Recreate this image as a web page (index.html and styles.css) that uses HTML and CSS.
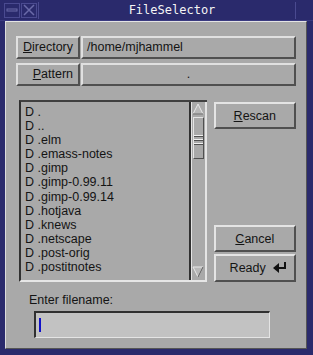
FILE: index.html
```html
<!DOCTYPE html>
<html>
<head>
<meta charset="utf-8">
<link rel="stylesheet" href="styles.css">
</head>
<body>
<div class="window">
  <div class="titlebar">
    <div class="tbtn"><svg width="12" height="12" viewBox="0 0 12 12"><rect x="1" y="5" width="10" height="2" fill="none" stroke="#6a6aa8" stroke-width="1"/></svg></div>
    <div class="tbtn"><svg width="12" height="12" viewBox="0 0 12 12"><path d="M1 1 L11 11 M11 1 L1 11" stroke="#6a6aa8" stroke-width="1.5"/></svg></div>
    <div class="title">FileSelector</div>
  </div>
  <div class="client">
    <div class="fields">
      <div class="frow">
        <div class="flabel left"><u>D</u>irectory</div>
        <div class="fvalue">/home/mjhammel</div>
      </div>
      <div class="frow">
        <div class="flabel right"><u>P</u>attern</div>
        <div class="fvalue center">.</div>
      </div>
    </div>
    <div class="main">
      <div class="listbox">
        <div class="items">
          <div>D .</div>
          <div>D ..</div>
          <div>D .elm</div>
          <div>D .emass-notes</div>
          <div>D .gimp</div>
          <div>D .gimp-0.99.11</div>
          <div>D .gimp-0.99.14</div>
          <div>D .hotjava</div>
          <div>D .knews</div>
          <div>D .netscape</div>
          <div>D .post-orig</div>
          <div>D .postitnotes</div>
        </div>
        <div class="scrollbar">
          <svg class="arrow" width="12" height="12" viewBox="0 0 12 12"><path d="M6 1 L11 11 L1 11 Z" fill="#b8b8b8" stroke="#e8e8e8" stroke-width="1"/><path d="M11 11 L1 11" stroke="#555" stroke-width="1"/></svg>
          <div class="thumb"><span></span><span></span><span></span></div>
          <div class="spacer"></div>
          <svg class="arrow" width="12" height="12" viewBox="0 0 12 12"><path d="M1 1 L11 1 L6 11 Z" fill="#b8b8b8" stroke="#e8e8e8" stroke-width="1"/><path d="M11 1 L6 11" stroke="#555" stroke-width="1"/></svg>
        </div>
      </div>
      <div class="buttons">
        <div class="btn"><u>R</u>escan</div>
        <div class="grow"></div>
        <div class="btn"><u>C</u>ancel</div>
        <div class="btn ready">Ready <svg width="16" height="12" viewBox="0 0 16 12"><path d="M1 8 L7 3 L7 13 Z" fill="#111" transform="translate(0,-2)"/><path d="M7 6 H13 V0" fill="none" stroke="#111" stroke-width="2"/></svg></div>
      </div>
    </div>
    <div class="entry">
      <div class="elabel">Enter filename:</div>
      <div class="einput"><span class="cursor"></span></div>
    </div>
  </div>
</div>
</body>
</html>
```

FILE: styles.css
```css
html, body {
  margin: 0;
  padding: 0;
  background: #2a2a6c;
}
.window {
  width: 313px;
  height: 355px;
  background: #2a2a6c;
  display: flex;
  flex-direction: column;
  font-family: "Liberation Sans", Arial, sans-serif;
  font-size: 12px;
  color: #141414;
}
.titlebar {
  height: 21px;
  display: flex;
  align-items: center;
  padding-left: 4px;
  box-sizing: border-box;
  border-bottom: 1px solid #3a3a80;
}
.tbtn {
  width: 16px;
  height: 15px;
  border: 1px solid #4a4a90;
  box-sizing: border-box;
  display: flex;
  align-items: center;
  justify-content: center;
  margin-right: 1px;
}
.title {
  flex: 1;
  text-align: center;
  color: #f4f4f4;
  font-family: "DejaVu Sans Mono", monospace;
  font-size: 12px;
  padding-left: 10px;
  height: 17px;
  line-height: 16px;
  border-left: 1px solid #4a4a90;
  border-right: 1px solid #4a4a90;
  margin-right: 17px;
}
.client {
  margin: 0 6px 6px 5px;
  flex: 1;
  background: #a9a9a9;
  border-top: 1px solid #e4e4e4;
  border-left: 1px solid #dcdcdc;
  border-right: 1px solid #555;
  border-bottom: 1px solid #555;
  box-sizing: border-box;
  padding: 14px 10px 0 10px;
  display: flex;
  flex-direction: column;
}
.fields {
  display: flex;
  flex-direction: column;
  gap: 4px;
}
.frow {
  display: flex;
  height: 23px;
  gap: 1px;
}
.flabel, .fvalue {
  box-sizing: border-box;
  border-top: 2px solid #e0e0e0;
  border-left: 2px solid #e0e0e0;
  border-bottom: 2px solid #505050;
  border-right: 2px solid #505050;
  line-height: 19px;
  font-size: 12.5px;
}
.flabel {
  width: 64px;
  padding: 0 5px;
}
.flabel.right { text-align: right; }
.fvalue {
  flex: 1;
  padding: 0 4px;
}
.fvalue.center { text-align: center; }
.main {
  display: flex;
  margin-top: 14px;
  height: 182px;
}
.listbox {
  margin-left: 3px;
  width: 189px;
  display: flex;
  box-sizing: border-box;
  border-top: 2px solid #404040;
  border-left: 2px solid #303030;
  border-bottom: 2px solid #e6e6e6;
}
.items {
  flex: 1;
  padding: 3px 0 0 4px;
  border-right: 2px solid #303030;
  line-height: 14.1px;
  font-size: 12.5px;
}
.scrollbar {
  width: 16px;
  box-sizing: border-box;
  border-left: 1px solid #e4e4e4;
  border-right: 2px solid #e4e4e4;
  display: flex;
  flex-direction: column;
  align-items: center;
  padding: 1px 0 2px;
}
.arrow {
  display: block;
}
.thumb {
  margin-top: 2px;
  width: 11px;
  height: 42px;
  box-sizing: border-box;
  border-top: 1px solid #e4e4e4;
  border-left: 1px solid #e4e4e4;
  border-right: 1px solid #505050;
  border-bottom: 1px solid #505050;
  display: flex;
  flex-direction: column;
  justify-content: center;
  gap: 2px;
  padding-top: 4px;
}
.thumb span {
  height: 1px;
  background: #f0f0f0;
  border-bottom: 1px solid #505050;
}
.spacer { flex: 1; }
.buttons {
  margin-left: 7px;
  padding-top: 2px;
  width: 83px;
  display: flex;
  flex-direction: column;
  gap: 2px;
}
.grow { flex: 1; }
.btn {
  height: 27px;
  box-sizing: border-box;
  border-top: 2px solid #e4e4e4;
  border-left: 2px solid #e4e4e4;
  border-bottom: 2px solid #505050;
  border-right: 2px solid #505050;
  display: flex;
  align-items: center;
  justify-content: center;
  font-size: 12.5px;
}
.btn.ready {
  height: 28px;
  justify-content: space-between;
  padding: 0 6px 0 14px;
}
.entry {
  margin-top: 11px;
  padding-left: 13px;
}
.elabel {
  font-size: 12.5px;
  line-height: 14px;
}
.einput {
  margin-top: 4px;
  margin-left: 5px;
  width: 236px;
  height: 27px;
  box-sizing: border-box;
  background: #c2c2c2;
  border-top: 2px solid #303030;
  border-left: 2px solid #303030;
  border-bottom: 1px solid #e4e4e4;
  border-right: 1px solid #e4e4e4;
  padding: 5px 0 0 3px;
}
.cursor {
  display: block;
  width: 2px;
  height: 14px;
  background: #1010c8;
}
```
